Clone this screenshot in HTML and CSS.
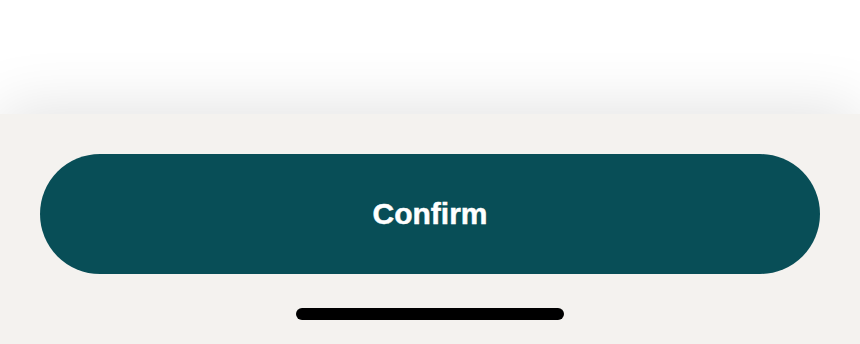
FILE: index.html
```html
<!DOCTYPE html>
<html>
<head>
<meta charset="utf-8">
<link rel="stylesheet" href="styles.css">
</head>
<body>
<div class="page">
  <div class="content"></div>
  <div class="footer">
    <button class="confirm">Confirm</button>
    <div class="home-indicator"></div>
  </div>
</div>
</body>
</html>
```
FILE: styles.css
```css
html, body {
  margin: 0;
  padding: 0;
  background: #ffffff;
  overflow: hidden;
}
.page {
  width: 860px;
  height: 344px;
  display: flex;
  flex-direction: column;
}
.content {
  height: 114px;
  flex: none;
  background: #ffffff;
}
.footer {
  flex: 1;
  background: #f4f2ef;
  box-shadow: 0 -4px 60px rgba(0, 0, 0, 0.12);
  padding: 40px 40px 0;
  display: flex;
  flex-direction: column;
  align-items: center;
  position: relative;
}
.confirm {
  width: 100%;
  height: 120px;
  border: none;
  border-radius: 60px;
  background: #084e57;
  color: #ffffff;
  font-family: "Liberation Sans", Arial, sans-serif;
  font-weight: 700;
  font-size: 30px;
  -webkit-text-stroke: 0.5px #ffffff;
  padding: 0;
  cursor: pointer;
}
.home-indicator {
  margin-top: 34px;
  width: 268px;
  height: 12px;
  border-radius: 6px;
  background: #000000;
}
```
